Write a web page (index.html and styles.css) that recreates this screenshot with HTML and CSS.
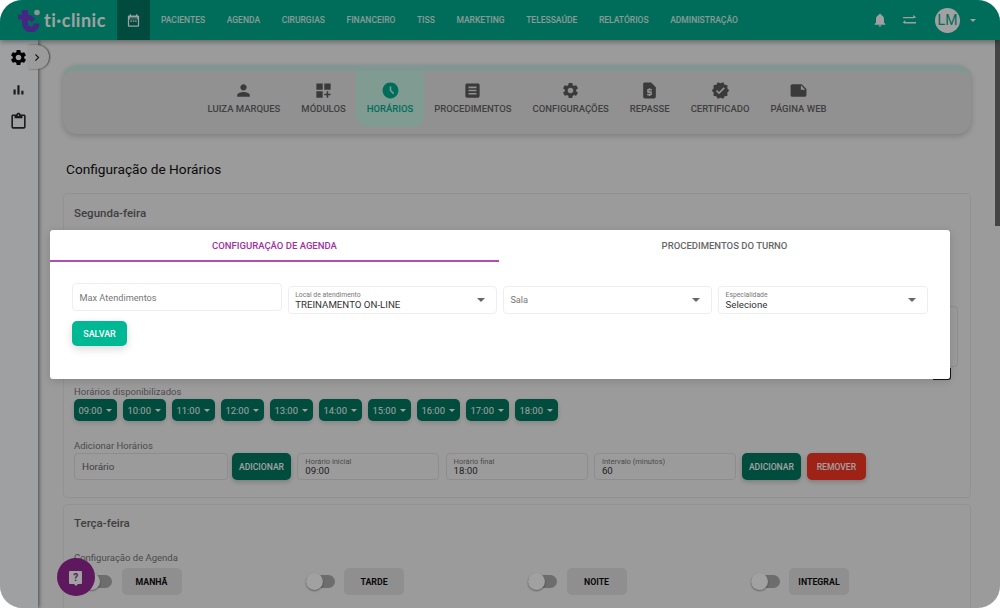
FILE: index.html
```html
<!DOCTYPE html>
<html lang="pt-BR">
<head>
<meta charset="utf-8">
<title>ti-clinic</title>
<link rel="stylesheet" href="styles.css">
</head>
<body>
<div class="app">
  <header class="topbar">
    <div class="logo">
      <svg class="logo-mark" viewBox="0 0 24 24" width="24" height="24"><path d="M8 2v13c0 4 3 6.500 6 6.500s5.500-2.500 5.500-6" fill="none" stroke="#6a3fd0" stroke-width="6"/><path d="M1 9h9c3 0 5 2 6.500 3.500" fill="none" stroke="#6a3fd0" stroke-width="5"/><circle cx="20" cy="4.500" r="2.800" fill="#e8e8e8"/></svg>
      <span class="logo-text">ti·clinic</span>
    </div>
    <div class="cal-cell">
      <svg viewBox="0 0 24 24" width="15" height="15"><path d="M19 4h-1V2h-2v2H8V2H6v2H5C3.900 4 3 4.900 3 6v14c0 1.100.900 2 2 2h14c1.100 0 2-.900 2-2V6c0-1.100-.900-2-2-2zm0 16H5V10h14v10zM6 7h12v2H6z" fill="#fff"/><rect x="7" y="12" width="2.500" height="2" fill="#fff"/><rect x="10.800" y="12" width="2.500" height="2" fill="#fff"/><rect x="14.500" y="12" width="2.500" height="2" fill="#fff"/></svg>
    </div>
    <nav class="nav">
      <a>Pacientes</a><a>Agenda</a><a>Cirurgias</a><a>Financeiro</a><a>TISS</a><a>Marketing</a><a>Telessaúde</a><a>Relatórios</a><a>Administração</a>
    </nav>
    <div class="top-actions">
      <svg viewBox="0 0 24 24" width="16" height="16"><path d="M12 22c1.100 0 2-.900 2-2h-4c0 1.100.890 2 2 2zm6-6v-5c0-3.070-1.640-5.640-4.500-6.320V4c0-.830-.670-1.500-1.500-1.500s-1.500.670-1.500 1.500v.680C7.630 5.360 6 7.920 6 11v5l-2 2v1h16v-1l-2-2z" fill="#fff"/></svg>
      <svg viewBox="0 0 16 12" width="15" height="12"><path d="M1 3.500h12M2 9h13" stroke="#fff" stroke-width="1.500" fill="none"/><path d="M12 .6l3.500 2.900-3.500 0zM3.500 6.100L.5 9l3 0z" fill="#fff"/></svg>
      <div class="avatar">LM</div>
      <span class="caret caret-light"></span>
    </div>
  </header>
  <div class="body-row">
    <aside class="sidebar">
      <svg viewBox="0 0 24 24" width="19" height="19"><use href="#gear"/></svg>
      <svg viewBox="0 0 24 24" width="15" height="15"><path d="M4 12h3.500v8H4zM10.200 5h3.500v15h-3.500zM16.500 14H20v6h-3.500z" fill="#2b2b2b"/></svg>
      <svg viewBox="0 0 24 24" width="19" height="19"><path d="M19 3h-4.180C14.400 1.840 13.300 1 12 1c-1.300 0-2.400.840-2.820 2H5c-1.100 0-2 .900-2 2v14c0 1.100.900 2 2 2h14c1.100 0 2-.900 2-2V5c0-1.100-.900-2-2-2zm-7 0c.550 0 1 .450 1 1s-.450 1-1 1-1-.450-1-1 .450-1 1-1zm7 16H5V5h2v3h10V5h2v14z" fill="#2b2b2b"/></svg>
      <div class="side-toggle"><svg viewBox="0 0 10 10" width="8" height="9"><path d="M3 1l4 4-4 4" fill="none" stroke="#222" stroke-width="1.500"/></svg></div>
    </aside>
    <main class="main">
      <div class="tabs-card">
        <a class="tab"><svg viewBox="0 0 24 24"><path d="M12 12c2.210 0 4-1.790 4-4s-1.790-4-4-4-4 1.790-4 4 1.790 4 4 4zm0 2c-2.670 0-8 1.340-8 4v2h16v-2c0-2.660-5.330-4-8-4z"/></svg>Luiza Marques</a>
        <a class="tab"><svg viewBox="0 0 24 24"><path d="M3 3h8v8H3zm10 0h8v8h-8zM3 13h8v8H3zm15 0h-2v3h-3v2h3v3h2v-3h3v-2h-3z"/></svg>Módulos</a>
        <a class="tab tab-active"><svg viewBox="0 0 24 24"><path d="M11.990 2C6.470 2 2 6.480 2 12s4.470 10 9.990 10C17.520 22 22 17.520 22 12S17.520 2 11.990 2zm3.300 14.710L11 12.410V7h2v4.590l3.710 3.710-1.420 1.410z"/></svg>Horários</a>
        <a class="tab"><svg viewBox="0 0 24 24"><path d="M19 3H5c-1.100 0-2 .900-2 2v14c0 1.100.900 2 2 2h14c1.100 0 2-.900 2-2V5c0-1.100-.900-2-2-2zm-2 14H7v-2h10v2zm0-4H7v-2h10v2zm0-4H7V7h10v2z"/></svg>Procedimentos</a>
        <a class="tab"><svg viewBox="0 0 24 24"><use href="#gear"/></svg>Configurações</a>
        <a class="tab"><svg viewBox="0 0 24 24"><path d="M14 2H6c-1.100 0-1.990.900-1.990 2L4 20c0 1.100.890 2 1.990 2H18c1.100 0 2-.900 2-2V8l-6-6zm1 10h-4v1h3c.550 0 1 .450 1 1v3c0 .550-.450 1-1 1h-1v1h-2v-1H9v-2h4v-1h-3c-.550 0-1-.450-1-1v-3c0-.550.450-1 1-1h1V9h2v1h2v2z"/></svg>Repasse</a>
        <a class="tab"><svg viewBox="0 0 24 24"><path d="M23 12l-2.440-2.790.340-3.690-3.610-.820-1.890-3.200L12 2.960 8.600 1.500 6.710 4.690 3.100 5.500l.340 3.700L1 12l2.440 2.790-.340 3.700 3.610.820L8.600 22.500l3.400-1.470 3.400 1.460 1.890-3.190 3.610-.820-.340-3.690L23 12zm-12.910 4.720l-3.800-3.810 1.480-1.480 2.320 2.330 5.850-5.870 1.480 1.480-7.330 7.350z"/></svg>Certificado</a>
        <a class="tab"><svg viewBox="0 0 24 24"><path d="M22 10l-6-6H4c-1.100 0-2 .900-2 2v12.010c0 1.100.900 1.990 2 1.990l16-.010c1.100 0 2-.890 2-1.990v-8zm-7-4.500l5.500 5.500H15V5.500z"/></svg>Página web</a>
      </div>
      <h1 class="page-title">Configuração de Horários</h1>
      <section class="day-card day-first">
        <h2 class="day-title">Segunda-feira</h2>
        <div class="procedure-box"></div>
        <div class="peek"></div>
        <div class="label label-avail">Horários disponibilizados</div>
        <div class="chips">
          <span class="chip">09:00<i class="caret caret-light"></i></span>
          <span class="chip">10:00<i class="caret caret-light"></i></span>
          <span class="chip">11:00<i class="caret caret-light"></i></span>
          <span class="chip">12:00<i class="caret caret-light"></i></span>
          <span class="chip">13:00<i class="caret caret-light"></i></span>
          <span class="chip">14:00<i class="caret caret-light"></i></span>
          <span class="chip">15:00<i class="caret caret-light"></i></span>
          <span class="chip">16:00<i class="caret caret-light"></i></span>
          <span class="chip">17:00<i class="caret caret-light"></i></span>
          <span class="chip">18:00<i class="caret caret-light"></i></span>
        </div>
        <div class="label label-add">Adicionar Horários</div>
        <div class="add-row">
          <div class="box box-hour"><span class="ph">Horário</span></div>
          <button class="btn btn-dark">Adicionar</button>
          <div class="box box-time"><small>Horário inicial</small><span>09:00</span></div>
          <div class="box box-time"><small>Horário final</small><span>18:00</span></div>
          <div class="box box-time"><small>Intervalo (minutos)</small><span>60</span></div>
          <button class="btn btn-dark">Adicionar</button>
          <button class="btn btn-red">Remover</button>
        </div>
      </section>
      <section class="day-card day-second">
        <h2 class="day-title">Terça-feira</h2>
        <div class="label label-conf">Configuração de Agenda</div>
        <div class="shifts">
          <div class="shift"><span class="toggle"></span><button class="btn btn-shift">Manhã</button></div>
          <div class="shift"><span class="toggle"></span><button class="btn btn-shift">Tarde</button></div>
          <div class="shift"><span class="toggle"></span><button class="btn btn-shift">Noite</button></div>
          <div class="shift"><span class="toggle"></span><button class="btn btn-shift">Integral</button></div>
        </div>
      </section>
    </main>
    <div class="scroll-rail"><div class="scroll-thumb"></div></div>
  </div>
  <div class="help"><span class="help-bubble">?</span></div>
  <div class="overlay"></div>
  <div class="modal">
    <div class="modal-tabs">
      <div class="modal-tab modal-tab-active">Configuração de Agenda</div>
      <div class="modal-tab">Procedimentos do turno</div>
    </div>
    <div class="modal-form">
      <div class="field field-max"><span class="ph">Max Atendimentos</span></div>
      <div class="field field-select"><div class="field-text"><small>Local de atendimento</small><span>TREINAMENTO ON-LINE</span></div><i class="caret caret-dark"></i></div>
      <div class="field field-select"><div class="field-text"><span class="ph ph-sala">Sala</span></div><i class="caret caret-dark"></i></div>
      <div class="field field-select"><div class="field-text"><small>Especialidade</small><span>Selecione</span></div><i class="caret caret-dark"></i></div>
    </div>
    <button class="btn btn-save">Salvar</button>
  </div>
</div>
<svg class="defs" width="0" height="0"><defs><path id="gear" d="M19.140 12.940c.040-.300.060-.610.060-.940 0-.320-.020-.640-.070-.940l2.030-1.580c.180-.140.230-.410.120-.610l-1.920-3.320c-.120-.220-.370-.290-.590-.220l-2.390.960c-.500-.380-1.030-.700-1.620-.940l-.360-2.540c-.040-.240-.240-.410-.480-.410h-3.840c-.240 0-.430.170-.470.410l-.360 2.540c-.590.240-1.130.570-1.620.940l-2.390-.960c-.220-.080-.470 0-.590.220L2.740 8.870c-.120.210-.080.470.120.610l2.030 1.580c-.050.300-.090.630-.090.940s.020.640.07.940l-2.030 1.580c-.180.140-.230.410-.12.610l1.920 3.320c.120.220.370.290.590.220l2.390-.960c.500.380 1.030.700 1.620.940l.360 2.540c.050.240.240.410.480.410h3.840c.240 0 .440-.170.470-.410l.360-2.540c.590-.240 1.130-.560 1.620-.940l2.390.960c.220.080.470 0 .590-.220l1.920-3.320c.120-.220.070-.470-.120-.610l-2.010-1.580zM12 15.600c-1.980 0-3.600-1.620-3.600-3.600s1.620-3.600 3.600-3.600 3.600 1.620 3.600 3.600-1.620 3.600-3.600 3.600z"/></defs></svg>
</body>
</html>
```
FILE: styles.css
```css
* { box-sizing: border-box; }
html, body { margin: 0; padding: 0; height: 100%; background: #fff; overflow: hidden; }
body { font-family: Roboto, "Liberation Sans", sans-serif; color: #333; }
.defs { position: absolute; }
.app { position: relative; width: 1000px; height: 608px; border-radius: 22px; overflow: hidden; background: #f6f6f6; display: flex; flex-direction: column; }
.topbar { height: 40px; flex: none; background: #00ad90; display: flex; align-items: stretch; color: #fff; box-shadow: 0 2px 5px rgba(0,0,0,.35); position: relative; z-index: 3; }
.logo { width: 117px; flex: none; display: flex; align-items: center; padding-left: 17px; gap: 3px; }
.logo-mark { flex: none; }
.logo-text { font-family: Lato, sans-serif; font-weight: 700; font-size: 18px; letter-spacing: .5px; color: #fff; }
.cal-cell { width: 33px; flex: none; background: #007763; display: flex; align-items: center; justify-content: center; }
.nav { display: flex; align-items: center; padding-left: .2px; }
.nav a { padding: 0 10.800px; font-size: 8.500px; font-weight: 500; text-transform: uppercase; color: #fff; white-space: nowrap; opacity: .85; }
.top-actions { margin-left: auto; display: flex; align-items: center; padding-right: 24px; }
.top-actions svg:first-child { margin-right: 14px; }
.avatar { width: 25px; height: 25px; margin-left: 18px; border-radius: 50%; background: #fff; color: #00ad90; font-size: 14px; display: flex; align-items: center; justify-content: center; }
.top-actions .caret { margin-left: 10px; }
.caret { display: inline-block; width: 0; height: 0; border-left: 3.500px solid transparent; border-right: 3.500px solid transparent; border-top: 3.500px solid currentColor; }
.caret-light { color: #fff; }
.caret-dark { color: #666; }
.body-row { flex: 1; min-height: 0; display: flex; }
.sidebar { width: 38px; flex: none; background: #fcfdff; position: relative; display: flex; flex-direction: column; align-items: center; padding: 8px 2px 0 0; gap: 15px; box-shadow: 1px 0 4px rgba(0,0,0,.55); z-index: 2; }
.side-toggle { position: absolute; left: 28px; top: 5px; width: 21px; height: 24px; border-radius: 0 12px 12px 0; background: #f6f6f6; display: flex; align-items: center; justify-content: flex-start; padding-left: 5px; box-shadow: 1px 0 2px rgba(0,0,0,.55); }
.main { flex: 1; min-width: 0; padding: 25px 24px 0 25px; overflow: hidden; background: #f6f6f6; }
.tabs-card { height: 69px; border-radius: 14px; background: #e6e6e6; border-top: 6px solid #c9f0e4; box-shadow: 0 2px 6px rgba(0,0,0,.2); display: flex; justify-content: center; }
.tab { height: 56px; padding: 9.500px 10.500px 0; display: flex; flex-direction: column; align-items: center; font-size: 9.500px; line-height: 11px; font-weight: 500; text-transform: uppercase; color: #666; white-space: nowrap; gap: 3.500px; border-radius: 0 0 12px 12px; }
.tab svg { width: 19px; height: 19px; fill: #5c5c5c; flex: none; }
.tab-active { background: #c9f5e8; color: #00ad90; }
.tab-active svg { fill: #00ad90; }
.page-title { margin: 26px 0 0 3px; font-size: 13.700px; line-height: 18px; font-weight: 400; color: #111; }
.day-card { margin-top: 15px; border: 1px solid #e8e8e8; border-radius: 4px; padding: 0 10px; }
.day-first { height: 305px; }
.day-second { margin-top: 6px; height: 200px; }
.day-title { margin: 12px 0 0; font-size: 11.500px; line-height: 14px; font-weight: 500; color: #666; }
.day-second .day-title { margin-top: 11px; }
.procedure-box { height: 61px; margin-top: 86px; margin-right: 2px; border: 1px solid #e0e0e0; border-radius: 4px; }
.peek { height: 12px; width: 18px; margin-left: auto; margin-right: 9px; margin-top: 1px; border-right: 1px solid #222; border-bottom: 1px solid #222; border-radius: 0 0 3px 0; }
.label { font-size: 9.500px; line-height: 12px; color: #777; }
.label-avail { margin-top: 6px; }
.label-add { margin-top: 19px; }
.label-conf { margin-top: 22px; }
.chips { display: flex; gap: 6px; margin-top: 1px; }
.chip { width: 43px; height: 22px; background: #007a63; color: #fff; border-radius: 5px; font-size: 9.400px; display: flex; align-items: center; justify-content: center; gap: 4.500px; box-shadow: 0 2px 5px rgba(0,0,0,.15); }
.add-row { display: flex; margin-top: 1px; }
.box { height: 27px; border: 1px solid #e0e0e0; border-radius: 4px; display: flex; flex-direction: column; justify-content: center; padding: 0 7px; }
.box-hour { width: 154px; padding-left: 7px; margin-right: 4px; }
.box-time { width: 142px; margin-left: 6.300px; line-height: 10px; }
.box small { font-size: 7.500px; line-height: 8px; color: #777; }
.box span { font-size: 9.700px; color: #333; }
.box-hour .ph { font-size: 9.800px; color: #666; }
.btn { border: 0; font-family: inherit; text-transform: uppercase; font-weight: 500; font-size: 8.600px; border-radius: 5px; padding: 0; }
.btn-dark { width: 59px; height: 27px; background: #007a63; color: #fff; box-shadow: 0 2px 5px rgba(0,0,0,.2); }
.box-time + .btn-dark { margin-left: 6px; }
.btn-red { width: 59px; height: 27px; margin-left: 6px; background: #fb3623; color: #fff; box-shadow: 0 2px 5px rgba(0,0,0,.2); }
.shifts { display: grid; grid-template-columns: repeat(4, 222.500px); margin: 4px 0 0 9px; }
.shift { display: flex; align-items: center; gap: 9.500px; }
.toggle { width: 29px; height: 13px; border-radius: 7px; background: #adadad; position: relative; flex: none; }
.toggle::after { content: ""; position: absolute; left: 0; top: -2px; width: 17px; height: 17px; border-radius: 50%; background: #fff; box-shadow: 0 1px 2px rgba(0,0,0,.4); }
.btn-shift { width: 60px; height: 27px; background: #e3e3e3; color: #111; font-size: 8.800px; font-weight: 700; }
.scroll-rail { width: 5px; flex: none; background: #f6f6f6; position: relative; z-index: 2; }
.scroll-thumb { height: 186px; background: #6c6c6c; }
.help { position: absolute; left: 57px; top: 558px; width: 37.500px; height: 38px; border-radius: 50%; background: #952995; display: flex; align-items: center; justify-content: center; z-index: 4; }
.help-bubble { position: relative; width: 13px; height: 13px; background: #fff; color: #952995; font-size: 10px; font-weight: 700; line-height: 13px; text-align: center; border-radius: 1px; }
.help-bubble::after { content: ""; position: absolute; left: 4.500px; bottom: -2px; border-left: 2px solid transparent; border-right: 2px solid transparent; border-top: 2px solid #fff; }
.overlay { position: absolute; inset: 0; background: rgba(0,0,0,.37); z-index: 5; }
.modal { position: absolute; left: 50px; top: 230px; width: 900px; height: 149px; background: #fff; border-radius: 3px; z-index: 6; box-shadow: 0 2px 8px rgba(0,0,0,.15); }
.modal-tabs { display: flex; height: 32px; }
.modal-tab { flex: none; width: 449px; height: 32px; padding-top: 10px; text-align: center; font-size: 9.500px; line-height: 12px; font-weight: 500; text-transform: uppercase; color: #666; }
.modal-tab + .modal-tab { width: 451px; }
.modal-tab-active { color: #a22fa2; border-bottom: 2px solid #b04fb0; }
.modal-form { display: grid; grid-template-columns: 210px 209.500px 209.500px 209.500px; column-gap: 5.700px; margin: 21px 0 0 22px; align-items: start; }
.field { border: 1px solid #eeeeee; border-radius: 4px; background: #fff; height: 28px; display: flex; align-items: center; padding: 0 8px 0 6.500px; }
.field-select { margin-top: 3px; }
.field-text { flex: 1; min-width: 0; display: flex; flex-direction: column; }
.field-text small { font-size: 6.800px; line-height: 8px; color: #777; }
.field-text span { font-size: 9.700px; line-height: 11px; color: #333; }
.field .ph { font-size: 9.200px; color: #777; }
.field-text .ph-sala { line-height: 12px; }
.field .caret { border-left-width: 4px; border-right-width: 4px; border-top-width: 4px; margin-right: 3px; }
.btn-save { display: block; width: 55px; height: 25px; margin: 7px 0 0 22px; background: #00b894; color: #fff; font-size: 9px; box-shadow: 0 3px 8px rgba(0,0,0,.15); }
```
